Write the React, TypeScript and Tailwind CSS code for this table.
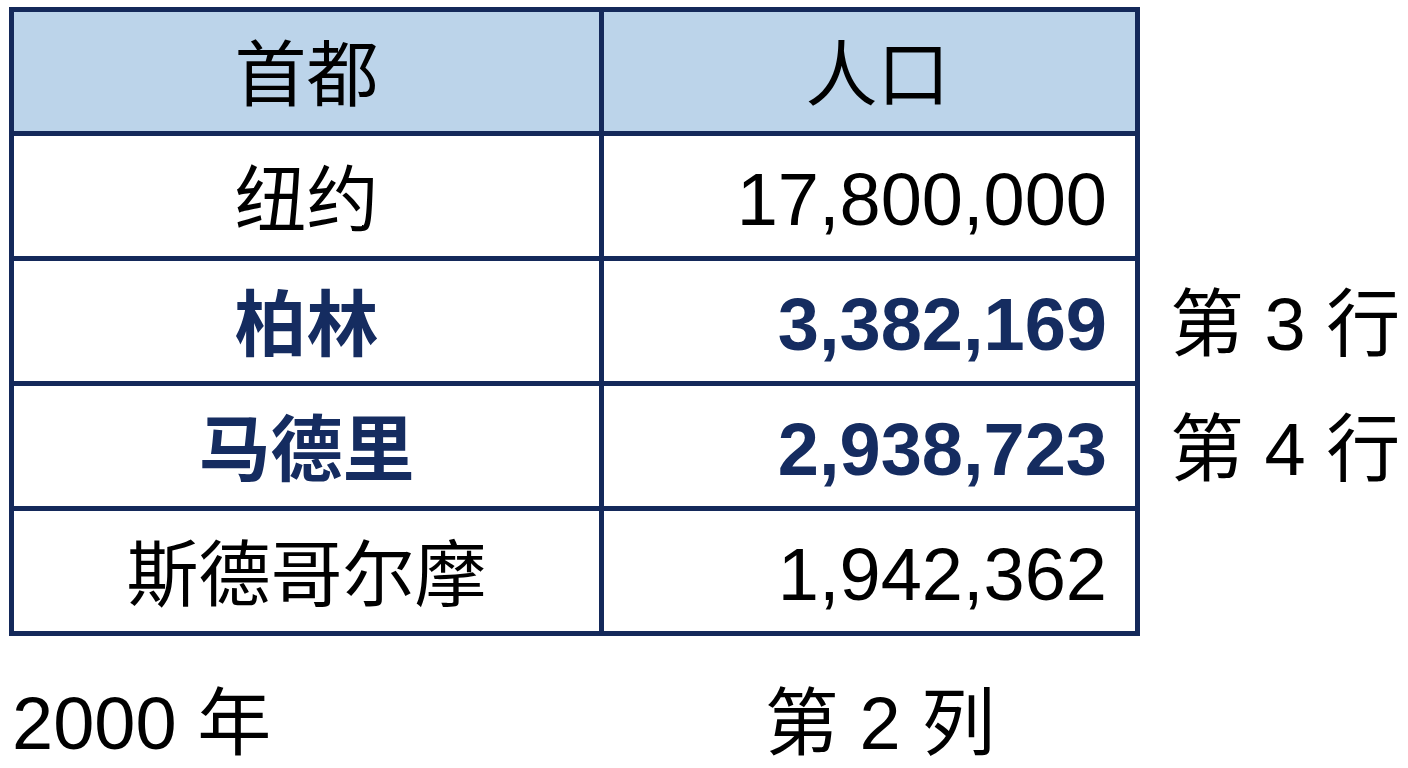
const rows = [
  { city: "纽约", pop: "17,800,000", strong: false, note: "" },
  { city: "柏林", pop: "3,382,169", strong: true, note: "第 3 行" },
  { city: "马德里", pop: "2,938,723", strong: true, note: "第 4 行" },
  { city: "斯德哥尔摩", pop: "1,942,362", strong: false, note: "" },
];

const font = { fontFamily: '"Liberation Sans", "Noto Sans CJK SC", sans-serif' };

export default function App() {
  return (
    <main className="min-h-screen w-[1408px] bg-white pl-[9px] pt-[7px] text-black" style={font}>
      <div className="flex items-start">
        <div className="w-[1131px] border-[5px] border-[#14295a]">
          <div className="grid h-[119px] grid-cols-[590px_1fr] bg-[#bcd4ea]">
            <div className="flex items-center justify-center border-r-[5px] border-[#14295a] pt-[6px] text-[72px] leading-none">
              首都
            </div>
            <div className="flex items-center justify-center pl-4 pt-[6px] text-[72px] leading-none">人口</div>
          </div>
          {rows.map((row) => (
            <div
              key={row.city}
              className={`grid h-[125px] grid-cols-[590px_1fr] border-t-[5px] border-[#14295a] ${row.strong ? "font-bold text-[#152c60]" : ""}`}
            >
              <div className="flex items-center justify-center border-r-[5px] border-[#14295a] pt-[8px] text-[72px] leading-none">
                {row.city}
              </div>
              <div className="flex items-center justify-end pr-[28px] pt-[8px] text-[74px] leading-none">{row.pop}</div>
            </div>
          ))}
        </div>
        <div className="ml-[30px] flex flex-col pt-[119px]">
          {rows.map((row) => (
            <div key={row.city} className="flex h-[125px] items-center whitespace-pre pt-[22px] text-[74px] leading-none">
              {row.note}
            </div>
          ))}
        </div>
      </div>
      <div className="mt-[51px] flex w-[1131px] text-[74px] leading-none">
        <div className="w-[595px] pl-[3px]">2000 年</div>
        <div className="flex flex-1 justify-center pl-4">第 2 列</div>
      </div>
    </main>
  );
}
